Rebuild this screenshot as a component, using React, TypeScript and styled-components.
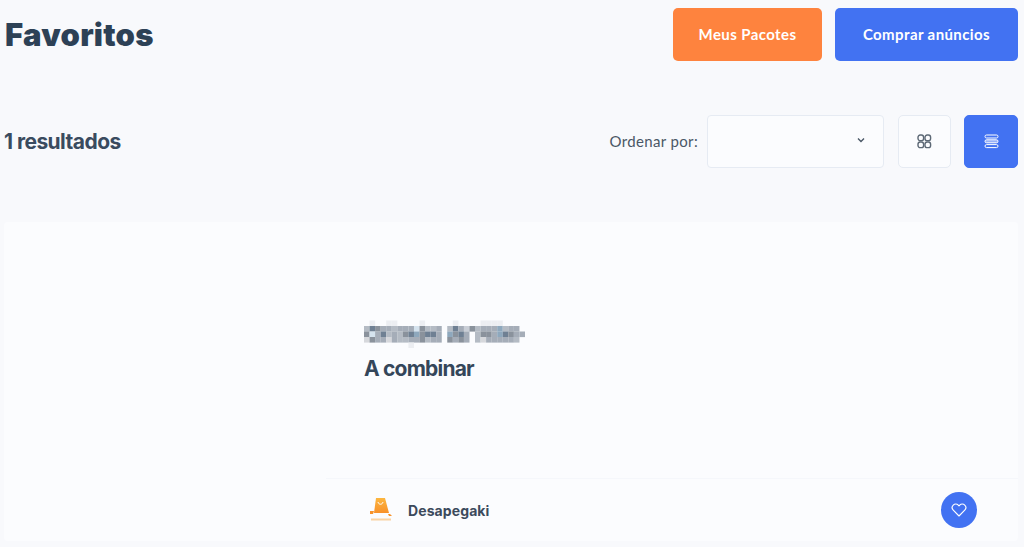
import styled, { createGlobalStyle } from "styled-components";

const GlobalStyle = createGlobalStyle`
  html, body {
    margin: 0;
    padding: 0;
    background: #f8f9fc;
    overflow: hidden;
  }
  * { box-sizing: border-box; }
`;

const Page = styled.div`
  width: 1024px;
  height: 547px;
  padding: 8px 6px 0 4px;
  display: flex;
  flex-direction: column;
  overflow: hidden;
  font-family: "Inter", "Liberation Sans", sans-serif;
  color: #2f4054;
`;

const TopBar = styled.header`
  display: flex;
  justify-content: space-between;
  align-items: center;
  height: 53px;
`;

const Title = styled.h1`
  margin: 0 0 0 1px;
  font-size: 31px;
  font-weight: 900;
  letter-spacing: 0.25px;
  color: #2d4156;
`;

const Actions = styled.div`
  display: flex;
  gap: 13px;
`;

const ActionButton = styled.button<{ $bg: string; $width: number }>`
  width: ${(p) => p.$width}px;
  height: 53px;
  padding: 0 0 2px;
  border: none;
  border-radius: 5px;
  background: ${(p) => p.$bg};
  color: #fff;
  font-family: "Lato", "Liberation Sans", sans-serif;
  font-size: 15px;
  font-weight: 700;
  letter-spacing: 0.4px;
`;

const Toolbar = styled.div`
  display: flex;
  justify-content: space-between;
  align-items: center;
  margin-top: 54px;
  height: 53px;
`;

const ResultCount = styled.h2`
  margin: 0;
  font-size: 21px;
  font-weight: 700;
  letter-spacing: -0.55px;
  color: #3a4b5f;
`;

const Controls = styled.div`
  display: flex;
  align-items: center;
`;

const SortLabel = styled.span`
  margin: 0 9px 2px 0;
  font-family: "Lato", "Liberation Sans", sans-serif;
  font-size: 15px;
  letter-spacing: 0.35px;
  color: #4a5766;
`;

const SortSelect = styled.div`
  width: 177px;
  height: 53px;
  background: #fbfcfe;
  border: 1px solid #e6ebf3;
  border-radius: 4px;
  display: flex;
  align-items: center;
  justify-content: flex-end;
  padding: 0 18px 3px 0;
  margin-right: 14px;
  color: #4a5766;
`;

const ViewButton = styled.button<{ $active?: boolean }>`
  width: ${(p) => (p.$active ? "54px" : "53px")};
  height: 53px;
  padding: 0;
  display: flex;
  align-items: center;
  justify-content: center;
  border-radius: 5px;
  border: 1px solid ${(p) => (p.$active ? "#4272f2" : "#e6ebf3")};
  background: ${(p) => (p.$active ? "#4272f2" : "#fbfcfe")};
  color: ${(p) => (p.$active ? "#fff" : "#5c6875")};
  margin-left: ${(p) => (p.$active ? "13px" : "0")};
`;

const Card = styled.article`
  margin-top: 54px;
  height: 319px;
  display: flex;
  background: #fbfcfe;
  border-radius: 4px;
`;

const Thumb = styled.div`
  width: 322px;
  flex-shrink: 0;
`;

const CardBody = styled.div`
  flex: 1;
  display: flex;
  flex-direction: column;
  min-width: 0;
`;

const CardMain = styled.div`
  flex: 1;
  padding: 98px 0 0 36px;
`;

const Price = styled.div`
  margin: 8px 0 0 2px;
  font-size: 21px;
  font-weight: 700;
  letter-spacing: -0.8px;
  color: #34465a;
`;

const CardFooter = styled.div`
  height: 63px;
  border-top: 1px solid #f5f7fb;
  display: flex;
  align-items: center;
  padding: 0 41px 0 43px;
`;

const SellerName = styled.span`
  margin-left: 15px;
  font-size: 14px;
  font-weight: 700;
  letter-spacing: 0.1px;
  color: #3c4a5c;
`;

const FavButton = styled.button`
  margin-left: auto;
  width: 36px;
  height: 36px;
  border: none;
  border-radius: 50%;
  background: #4272f2;
  color: #fff;
  padding: 0;
  display: flex;
  align-items: center;
  justify-content: center;
`;

const mosaicRows = [
  ".f..ff....f.....f....ffff.....",
  "bedccbcccLdbbc.bechdbcccgbcc..",
  "dLcebcbdegdeec.gdec.bddcgedcc.",
  "adccacbbccdbcc.dcdc.bacccccb..",
  "........f.....................",
];
const mosaicColors: Record<string, string> = {
  f: "#eceef2",
  L: "#d5e3ee",
  a: "#d6d8dc",
  b: "#b4bbc4",
  c: "#a5adb8",
  d: "#8a929c",
  e: "#6f8093",
  g: "#8ea8bd",
  h: "#c9ced6",
};

function BlurredTitle() {
  return (
    <svg width="168" height="28" style={{ display: "block", filter: "blur(0.5px)" }}>
      {mosaicRows.map((row, y) =>
        row.split("").map((ch, x) =>
          ch === "." ? null : (
            <rect key={`${x}-${y}`} x={x * 5.55 + 2} y={y * 5.5 + 0.5} width={5.6} height={5.6} fill={mosaicColors[ch]} />
          )
        )
      )}
    </svg>
  );
}

function ShopLogo() {
  return (
    <svg width="24" height="26" viewBox="0 0 24 26" style={{ display: "block", filter: "blur(0.35px)" }}>
      <defs>
        <linearGradient id="bag" x1="0" y1="0" x2="0" y2="1">
          <stop offset="0" stopColor="#fcb63f" />
          <stop offset="1" stopColor="#f8912a" />
        </linearGradient>
      </defs>
      <path d="M7 1h9l4 15H5z" fill="url(#bag)" />
      <path d="M9 5c.6 3 4.4 3 5 0" fill="none" stroke="#fff" strokeWidth="1" />
      <path d="M1 14h4l-1 3H1z M19 17h2l2 2h-3z" fill="#f7922b" />
      <rect x="2" y="21.5" width="20" height="2" fill="#f8a94a" opacity="0.5" />
    </svg>
  );
}

function GridIcon() {
  return (
    <svg width="15" height="15" viewBox="0 0 15 15" fill="none" stroke="currentColor" strokeWidth="1.4">
      <rect x="1" y="1" width="5.6" height="5.6" rx="2.2" />
      <rect x="8" y="1" width="5.6" height="5.6" rx="2.2" />
      <rect x="1" y="8" width="5.6" height="5.6" rx="2.2" />
      <rect x="8" y="8" width="5.6" height="5.6" rx="2.2" />
    </svg>
  );
}

function ListIcon() {
  return (
    <svg width="15" height="15" viewBox="0 0 15 15" fill="none" stroke="currentColor" strokeWidth="1">
      <rect x="1" y="1" width="13" height="3" rx="1.5" />
      <rect x="1" y="5.8" width="13" height="3" rx="1.5" fill="#ffffff" fillOpacity="0.45" />
      <rect x="1" y="10.6" width="13" height="3" rx="1.5" />
    </svg>
  );
}

export default function App() {
  return (
    <Page>
      <GlobalStyle />
      <TopBar>
        <Title>Favoritos</Title>
        <Actions>
          <ActionButton $bg="#fe833e" $width={149}>Meus Pacotes</ActionButton>
          <ActionButton $bg="#4272f2" $width={183}>Comprar anúncios</ActionButton>
        </Actions>
      </TopBar>

      <Toolbar>
        <ResultCount>1 resultados</ResultCount>
        <Controls>
          <SortLabel>Ordenar por:</SortLabel>
          <SortSelect>
            <svg width="8" height="6" viewBox="0 0 8 6" fill="none" stroke="currentColor" strokeWidth="1.4">
              <path d="M1 1.5l3 3 3-3" />
            </svg>
          </SortSelect>
          <ViewButton><GridIcon /></ViewButton>
          <ViewButton $active><ListIcon /></ViewButton>
        </Controls>
      </Toolbar>

      <Card>
        <Thumb />
        <CardBody>
          <CardMain>
            <BlurredTitle />
            <Price>A combinar</Price>
          </CardMain>
          <CardFooter>
            <ShopLogo />
            <SellerName>Desapegaki</SellerName>
            <FavButton>
              <svg width="16" height="16" viewBox="0 0 24 24" fill="none" stroke="currentColor" strokeWidth="1.7" strokeLinejoin="round">
                <path d="M12 21l-8.6-8.8a5.4 5.4 0 0 1 0-7.6 5.3 5.3 0 0 1 7.5 0L12 5.7l1.1-1.1a5.3 5.3 0 0 1 7.5 0 5.4 5.4 0 0 1 0 7.6z" />
              </svg>
            </FavButton>
          </CardFooter>
        </CardBody>
      </Card>
    </Page>
  );
}
